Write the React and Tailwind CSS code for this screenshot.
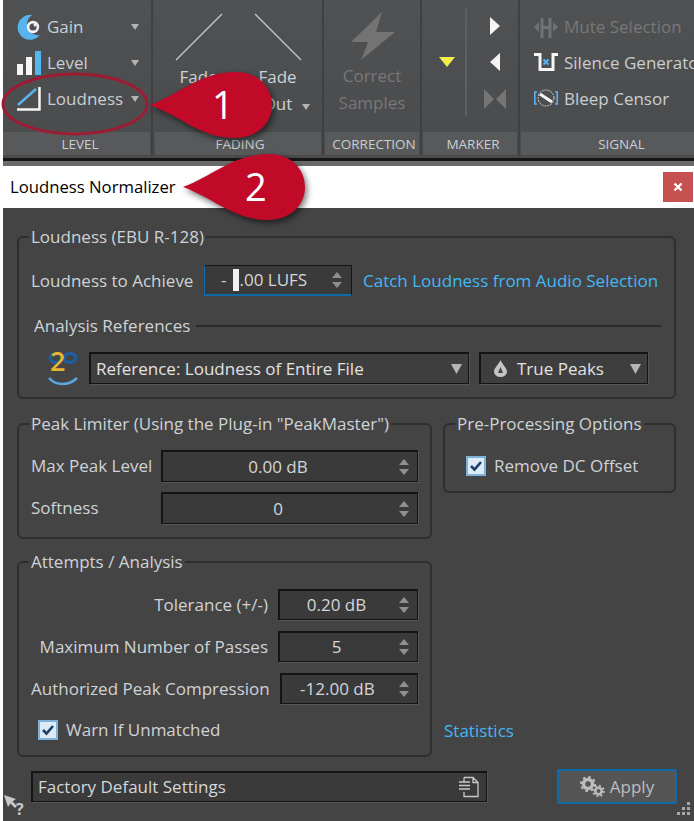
import React from "react";

const fieldCls =
  "flex items-center bg-[#3a3a3a] border border-[#141414] border-t-2 border-l-2 shadow-[1px_1px_0_#555]";

function Caret({ className = "w-2 h-[6px]" }) {
  return (
    <svg viewBox="0 0 8 6" preserveAspectRatio="none" className={className}>
      <path d="M0 0H8L4 6Z" fill="#b4b4b4" />
    </svg>
  );
}

function Spinner() {
  return (
    <svg width="12" height="18" viewBox="0 0 12 18" className="shrink-0">
      <path d="M6 1L11 7H1Z" fill="#8f8f8f" />
      <path d="M1 11H11L6 17Z" fill="#8f8f8f" />
    </svg>
  );
}

function SpinField({ value, className }) {
  return (
    <div className={`${fieldCls} pr-[7px] ${className}`}>
      <span className="flex-1 text-center pr-[5px] text-[#d4d6d8]">{value}</span>
      <Spinner />
    </div>
  );
}

function Check({ label }) {
  return (
    <label className="flex items-center gap-2">
      <span className="w-5 h-5 bg-[#dcebf7] border-2 border-[#7fb2d8] flex items-center justify-center">
        <svg width="14" height="12" viewBox="0 0 14 12">
          <path d="M2 6L5.5 9.5L12 2" fill="none" stroke="#1f3f66" strokeWidth="2.6" />
        </svg>
      </span>
      <span>{label}</span>
    </label>
  );
}

function Group({ title, className, bodyClass, children }) {
  return (
    <fieldset className={`border-2 border-[#2e2e2e] rounded-md min-w-0 ${className}`}>
      <legend className="ml-[10px] px-[2px] h-6 leading-6 whitespace-nowrap">{title}</legend>
      <div className={bodyClass}>{children}</div>
    </fieldset>
  );
}

function RibbonGroup({ label, className, labelClass, children }) {
  return (
    <div className={`flex flex-col shrink-0 ${className}`}>
      <div className="h-[132px] relative flex">{children}</div>
      <div className={`h-[23px] bg-[#58595b] text-center text-[13.5px] leading-[25px] text-[#c9ced2] ${labelClass}`}>{label}</div>
    </div>
  );
}

function RibbonDivider() {
  return <div className="w-[2px] mx-[1px] h-[155px] bg-[#3f4042] shrink-0" />;
}

function RibbonRow({ icon, label, caret, disabled }) {
  return (
    <div className="h-9 flex items-center">
      <span className="w-6 h-6 mr-[6px] shrink-0">{icon}</span>
      <span className={`flex-1 whitespace-nowrap ${disabled ? "text-[#787878]" : "text-[#c9ced2]"}`}>{label}</span>
      {caret && <Caret className="w-2 h-[6px] mr-[11px]" />}
    </div>
  );
}

function Callout({ n, className, textClass }) {
  return (
    <div className={`absolute w-[126px] h-[68px] ${className}`}>
      <svg width="126" height="72" viewBox="0 -34 126 72" className="drop-shadow-[2px_3px_3px_rgba(0,0,0,0.55)]">
        <path d="M0 0C30 -11 50 -33 86 -33C108 -33 122 -18 122 0C122 18 108 33 84 33C52 33 30 11 0 0Z" fill="#c00a27" />
      </svg>
      <span className={`absolute top-[8px] text-[38px] leading-[50px] text-white ${textClass}`}>{n}</span>
    </div>
  );
}

const GainIcon = (
  <svg viewBox="0 0 24 26" width="24" height="26" className="-mt-[1px]">
    <path d="M15 1A12.5 12.5 0 1 0 23 21A11 11 0 0 1 15 1Z" fill="#58b4ec" />
    <circle cx="16" cy="13" r="6.2" fill="#f2f2f2" />
    <circle cx="16" cy="13" r="3.6" fill="#4f5052" />
    <circle cx="18" cy="11" r="1.5" fill="#f2f2f2" />
  </svg>
);
const LevelIcon = (
  <svg viewBox="0 0 24 24" width="24" height="24">
    <rect x="0" y="13" width="6" height="11" fill="#f5f5f5" />
    <rect x="9" y="6" width="6" height="18" fill="#f5f5f5" />
    <rect x="18" y="0" width="6" height="24" fill="#58b4ec" />
  </svg>
);
const LoudnessIcon = (
  <svg viewBox="0 0 24 24" width="24" height="24">
    <path d="M1 18L19 2" stroke="#58b4ec" strokeWidth="2.5" />
    <path d="M0 22.5H22.5V0" fill="none" stroke="#f5f5f5" strokeWidth="2.5" />
  </svg>
);
const MuteIcon = (
  <svg viewBox="0 0 24 24" width="24" height="24">
    <path d="M0 12L5 7V17ZM24 12L19 7V17Z" fill="#707172" />
    <rect x="6.5" y="3" width="3" height="20" fill="#707172" />
    <rect x="14.5" y="3" width="3" height="20" fill="#707172" />
    <rect x="9" y="11" width="6" height="3" fill="#707172" />
  </svg>
);
const SilenceIcon = (
  <svg viewBox="0 0 24 24" width="24" height="24">
    <path d="M0 3.5H6V18.5H19V3.5H24" fill="none" stroke="#f5f5f5" strokeWidth="3" />
    <path d="M9.5 8.5L14.5 13.5M14.5 8.5L9.5 13.5" stroke="#58b4ec" strokeWidth="2" />
  </svg>
);
const BleepIcon = (
  <svg viewBox="0 0 24 24" width="24" height="24">
    <path d="M3 5H0.8V17H3M21 5H23.2V17H21" fill="none" stroke="#58b4ec" strokeWidth="1.6" />
    <circle cx="12" cy="11" r="8" fill="none" stroke="#d8d8d8" strokeWidth="1" strokeDasharray="2 1" />
    <path d="M6 7L18 15" stroke="#f5f5f5" strokeWidth="3" />
  </svg>
);

export default function App() {
  return (
    <div className="relative w-[694px] h-[821px] overflow-hidden bg-white pl-[3px] flex flex-col font-['Open_Sans',sans-serif] text-[17px] text-[#cfd3d6]">
      {/* ribbon */}
      <div className="h-[158px] flex bg-gradient-to-b from-[#505153] to-[#4a4b4d]">
        <RibbonGroup label="LEVEL" className="w-[147px]" labelClass="pl-[7px]">
          <div className="pl-[14px] pt-[9px] w-full">
            <RibbonRow icon={GainIcon} label="Gain" caret />
            <RibbonRow icon={LevelIcon} label="Level" caret />
            <RibbonRow icon={LoudnessIcon} label="Loudness" caret />
          </div>
        </RibbonGroup>
        <RibbonDivider />
        <RibbonGroup label="FADING" className="w-[166px] ml-[1px]" labelClass="pl-1">
          <div className="w-1/2 flex flex-col items-center pl-[4px] pt-[13px]">
            <svg width="48" height="48" viewBox="0 0 48 48">
              <path d="M1 47L47 1" stroke="#c8c8c8" strokeWidth="1.2" />
            </svg>
            <span className="mt-[2px] leading-[27px]">Fade</span>
            <span className="leading-[27px]">In</span>
          </div>
          <div className="w-1/2 flex flex-col items-center pr-[4px] pt-[13px]">
            <svg width="48" height="48" viewBox="0 0 48 48">
              <path d="M1 1L47 47" stroke="#c8c8c8" strokeWidth="1.2" />
            </svg>
            <span className="mt-[2px] leading-[27px]">Fade</span>
            <span className="leading-[27px]">Out</span>
          </div>
          <Caret className="absolute left-[147px] top-[104px] w-2 h-[6px]" />
        </RibbonGroup>
        <RibbonDivider />
        <RibbonGroup label="CORRECTION" className="w-[94px]" labelClass="pl-1">
          <div className="w-full flex flex-col items-center pt-[12px] text-[#787878]">
            <svg width="48" height="48" viewBox="0 0 48 48">
              <path d="M34 0L3 30H20L13 48L47 20H28Z" fill="#737373" />
            </svg>
            <span className="mt-[2px] leading-[27px]">Correct</span>
            <span className="leading-[27px]">Samples</span>
          </div>
        </RibbonGroup>
        <RibbonDivider />
        <RibbonGroup label="MARKER" className="w-[94px]" labelClass="pl-[6px]">
          <div className="w-[44px] flex items-start justify-end pt-[57px] pr-[10px] border-r-2 border-[#5e5f61] h-[108px] mt-[8px]">
            <svg width="16" height="10" viewBox="0 0 16 10" className="-mt-[8px]">
              <path d="M0 0H16L8 10Z" fill="#f3ee4a" />
            </svg>
          </div>
          <div className="flex-1 flex flex-col items-center pl-[5px] pt-[17px] gap-[18px]">
            <svg width="10" height="18" viewBox="0 0 10 18"><path d="M0 0L10 9L0 18Z" fill="#f5f5f5" /></svg>
            <svg width="10" height="18" viewBox="0 0 10 18"><path d="M10 0L0 9L10 18Z" fill="#f5f5f5" /></svg>
            <svg width="22" height="20" viewBox="0 0 22 20"><path d="M0 0L10 10L0 20ZM22 0L12 10L22 20Z" fill="#757575" /></svg>
          </div>
        </RibbonGroup>
        <RibbonDivider />
        <RibbonGroup label="SIGNAL" className="flex-1 min-w-0" labelClass="pl-[28px]">
          <div className="pl-[13px] pt-[9px] w-full overflow-hidden">
            <RibbonRow icon={MuteIcon} label="Mute Selection" disabled />
            <RibbonRow icon={SilenceIcon} label="Silence Generator" />
            <RibbonRow icon={BleepIcon} label="Bleep Censor" />
          </div>
        </RibbonGroup>
      </div>
      <div className="h-[3px] bg-[#161616]" />
      <div className="h-[5px] bg-[#6a6a6a]" />

      {/* title bar */}
      <div className="h-[42px] bg-white flex items-center justify-between pl-[7px] pr-[1px] text-[16.7px] text-black">
        <span>Loudness Normalizer</span>
        <button className="w-[30px] h-[30px] bg-[#c75050] flex items-center justify-center">
          <svg width="10" height="10" viewBox="0 0 10 10">
            <path d="M1.5 1.5L8.5 8.5M8.5 1.5L1.5 8.5" stroke="#fff" strokeWidth="2.4" />
          </svg>
        </button>
      </div>

      {/* dialog */}
      <div className="flex-1 bg-[#444444] px-[14px] pt-[17px] flex flex-col">
        <Group title="Loudness (EBU R-128)" className="w-[659px] h-[174px]" bodyClass="px-[12px]">
          <div className="flex items-center mt-[16px] h-[31px]">
            <span className="w-[173px] whitespace-nowrap">Loudness to Achieve</span>
            <div className="w-[148px] h-[31px] flex items-center pr-2 bg-[#3a3a3a] border border-[#0f6aa8] border-b-2 border-t-[#161616] border-r-[#161616]">
              <span className="pl-[16px] flex-1 flex items-center text-[#d4d6d8] whitespace-nowrap">
                <span>-</span>
                <span className="w-[6px] h-[22px] bg-[#f0f0f0] ml-[7px]" />
                <span>.00 LUFS</span>
              </span>
              <Spinner />
            </div>
            <a className="ml-[11px] text-[#41b8f5] whitespace-nowrap">Catch Loudness from Audio Selection</a>
          </div>
          <div className="flex items-center mt-[17px] ml-[3px] h-[26px]">
            <span className="whitespace-nowrap">Analysis References</span>
            <div className="flex-1 h-[2px] bg-[#2a2a2a] ml-[6px] mr-[1px]" />
          </div>
          <div className="flex items-center mt-[10px]">
            <div className="relative w-[32px] h-[38px] ml-[16px] mr-[10px] shrink-0">
              <svg width="32" height="38" viewBox="0 0 32 38" className="absolute left-0 top-0">
                <ellipse cx="9" cy="9" rx="6" ry="4.5" fill="none" stroke="#1a5fa8" strokeWidth="3" />
                <ellipse cx="23" cy="9" rx="6" ry="4.5" fill="none" stroke="#1a5fa8" strokeWidth="3" />
                <path d="M2 29C9 37 22 37 30 29" fill="none" stroke="#5aa6dd" strokeWidth="2.5" />
              </svg>
              <span className="absolute left-[3px] -top-[3px] text-[27px] leading-[30px] font-semibold text-[#e8b32e]">2</span>
            </div>
            <div className={`${fieldCls} w-[380px] h-[32px] pl-[5px] pr-[6px] bg-[#3e3e3e]`}>
              <span className="flex-1 whitespace-nowrap text-[#e0e2e3]">Reference: Loudness of Entire File</span>
              <Caret className="w-[11px] h-[10px]" />
            </div>
            <div className={`${fieldCls} w-[169px] h-[32px] ml-[10px] pl-[13px] pr-[6px] bg-[#3e3e3e]`}>
              <svg width="13" height="17" viewBox="0 0 13 17" className="mr-[10px]">
                <path d="M6.5 0C8 4 13 8 13 11.5A6.5 5.5 0 0 1 0 11.5C0 8 5 4 6.5 0Z" fill="#c4c4c4" />
                <path d="M6.5 7L9 13H4Z" fill="#444" />
              </svg>
              <span className="flex-1 text-[#e0e2e3]">True Peaks</span>
              <Caret className="w-[11px] h-[10px]" />
            </div>
          </div>
        </Group>

        <div className="flex mt-[13px] gap-[11px]">
          <div className="w-[415px] shrink-0 flex flex-col">
            <Group title="Peak Limiter (Using the Plug-in &quot;PeakMaster&quot;)" className="h-[127px]" bodyClass="px-[12px]">
              <div className="flex items-center mt-[14px]">
                <span className="w-[130px] whitespace-nowrap">Max Peak Level</span>
                <SpinField value="0.00 dB" className="w-[257px] h-[32px]" />
              </div>
              <div className="flex items-center mt-[10px]">
                <span className="w-[130px]">Softness</span>
                <SpinField value="0" className="w-[257px] h-[32px]" />
              </div>
            </Group>
            <Group title="Attempts / Analysis" className="h-[207px] mt-[11px]" bodyClass="px-[12px]">
              <div className="flex items-center justify-end mt-[15px]">
                <span className="mr-[10px] whitespace-nowrap">Tolerance (+/-)</span>
                <SpinField value="0.20 dB" className="w-[140px] h-[31px]" />
              </div>
              <div className="flex items-center justify-end mt-[11px]">
                <span className="mr-[10px] whitespace-nowrap">Maximum Number of Passes</span>
                <SpinField value="5" className="w-[140px] h-[31px]" />
              </div>
              <div className="flex items-center justify-end mt-[11px]">
                <span className="mr-[10px] whitespace-nowrap">Authorized Peak Compression</span>
                <SpinField value="-12.00 dB" className="w-[140px] h-[31px]" />
              </div>
              <div className="mt-[13px] ml-[7px]">
                <Check label="Warn If Unmatched" />
              </div>
            </Group>
          </div>
          <div className="flex-1 flex flex-col">
            <Group title="Pre-Processing Options" className="h-[81px] w-[233px]" bodyClass="px-[21px]">
              <div className="mt-[17px]">
                <Check label="Remove DC Offset" />
              </div>
            </Group>
            <a className="mt-auto mb-[14px] ml-[1px] text-[#41b8f5]">Statistics</a>
          </div>
        </div>

        <div className="flex items-center mt-[12px] ml-[14px]">
          <div className={`${fieldCls} w-[456px] h-[31px] pl-[5px] pr-[7px]`}>
            <span className="flex-1 text-[#d4d6d8]">Factory Default Settings</span>
            <svg width="20" height="22" viewBox="0 0 20 22">
              <path d="M5 1.5H14L19 6.5V20.5H5V16M5 6V1.5M0 6H11M0 9.5H11M0 13H11M14 1.5V6.5H19" fill="none" stroke="#c8c8c8" strokeWidth="1.3" />
            </svg>
          </div>
          <button className="ml-[70px] w-[120px] h-[35px] bg-[#555555] border-2 border-[#0f6aa8] rounded-[2px] flex items-center justify-center gap-[5px] text-[#bcbec0]">
            <svg width="25" height="22" viewBox="0 0 25 22">
              <circle cx="8" cy="8" r="4.5" fill="none" stroke="#bdbdbd" strokeWidth="3.5" />
              <circle cx="8" cy="8" r="7" fill="none" stroke="#bdbdbd" strokeWidth="2" strokeDasharray="2.6 2.9" />
              <circle cx="18.5" cy="15" r="3.2" fill="none" stroke="#bdbdbd" strokeWidth="2.6" />
              <circle cx="18.5" cy="15" r="5.4" fill="none" stroke="#bdbdbd" strokeWidth="1.8" strokeDasharray="2 2.2" />
            </svg>
            <span>Apply</span>
          </button>
        </div>
      </div>

      {/* help cursor and resize grip, over the dialog corners */}
      <svg width="24" height="26" viewBox="0 0 24 26" className="absolute left-[3px] top-[794px]">
        <path d="M1 1L13 5L9.5 7.5L14 12L12 14L7.5 9.5L5 13Z" fill="#c8c8c8" />
        <text x="13" y="21" fontSize="16" fontWeight="700" fontFamily="Open Sans" fill="#c8c8c8">?</text>
      </svg>
      <svg width="18" height="18" viewBox="0 0 18 18" className="absolute left-[675px] top-[801px]">
        <path d="M12 1h3v3h-3zM7 6h3v3H7zM12 6h3v3h-3zM2 11h3v3H2zM7 11h3v3H7zM12 11h3v3h-3z" fill="#a8a8a8" />
      </svg>

      {/* annotations on top of the screenshot */}
      <svg width="150" height="68" viewBox="0 0 150 68" className="absolute left-0 top-[71px]">
        <ellipse cx="75" cy="33" rx="72" ry="30" fill="none" stroke="#9e1b34" strokeWidth="3" />
      </svg>
      <Callout n="1" className="left-[150px] top-[71px]" textClass="left-[62px]" />
      <Callout n="2" className="left-[183px] top-[153px]" textClass="left-[62px]" />
    </div>
  );
}
